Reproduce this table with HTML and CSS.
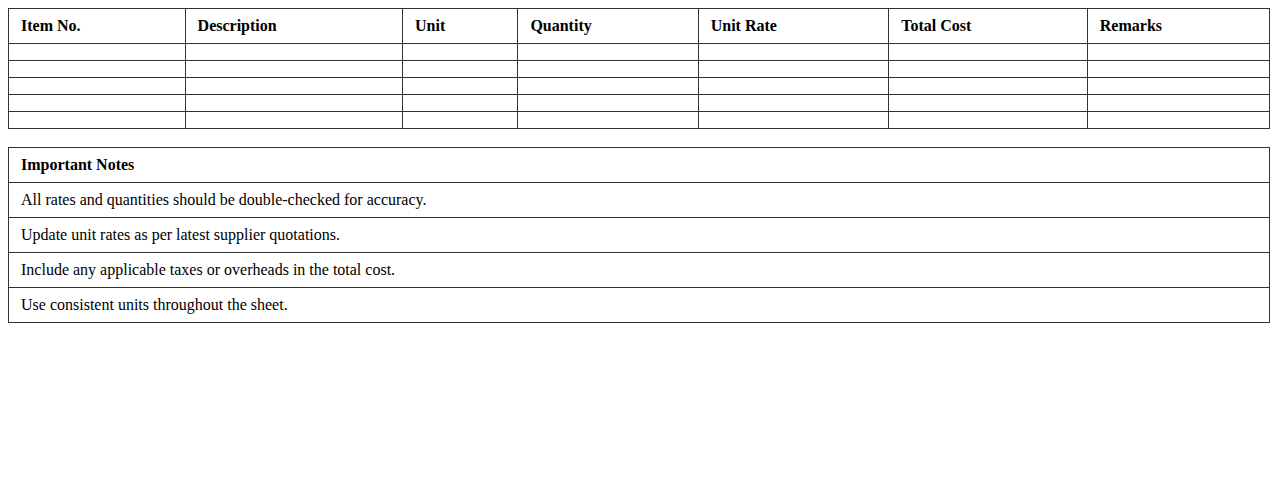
FILE: index.html
```html
<!DOCTYPE html>
<html>
<head>
<meta charset="utf-8">
<link rel="stylesheet" href="styles.css">
</head>
<body>
<table class="sheet">
  <thead>
    <tr><th>Item No.</th><th>Description</th><th>Unit</th><th>Quantity</th><th>Unit Rate</th><th>Total Cost</th><th>Remarks</th></tr>
  </thead>
  <tbody>
    <tr><td></td><td></td><td></td><td></td><td></td><td></td><td></td></tr>
    <tr><td></td><td></td><td></td><td></td><td></td><td></td><td></td></tr>
    <tr><td></td><td></td><td></td><td></td><td></td><td></td><td></td></tr>
    <tr><td></td><td></td><td></td><td></td><td></td><td></td><td></td></tr>
    <tr><td></td><td></td><td></td><td></td><td></td><td></td><td></td></tr>
  </tbody>
</table>
<table class="sheet notes">
  <thead><tr><th>Important Notes</th></tr></thead>
  <tbody>
    <tr><td>All rates and quantities should be double-checked for accuracy.</td></tr>
    <tr><td>Update unit rates as per latest supplier quotations.</td></tr>
    <tr><td>Include any applicable taxes or overheads in the total cost.</td></tr>
    <tr><td>Use consistent units throughout the sheet.</td></tr>
  </tbody>
</table>
</body>
</html>
```
FILE: styles.css
```css
body {
  margin: 8px;
  font-family: "Liberation Serif", "Times New Roman", serif;
  font-size: 16px;
  color: #000;
  background: #fff;
}
.sheet {
  width: 100%;
  border-collapse: collapse;
}
.sheet th,
.sheet td {
  border: 1px solid #333;
  padding: 8px 12px;
  text-align: left;
}
.sheet th {
  font-weight: bold;
}
.notes {
  margin-top: 18px;
}
```
